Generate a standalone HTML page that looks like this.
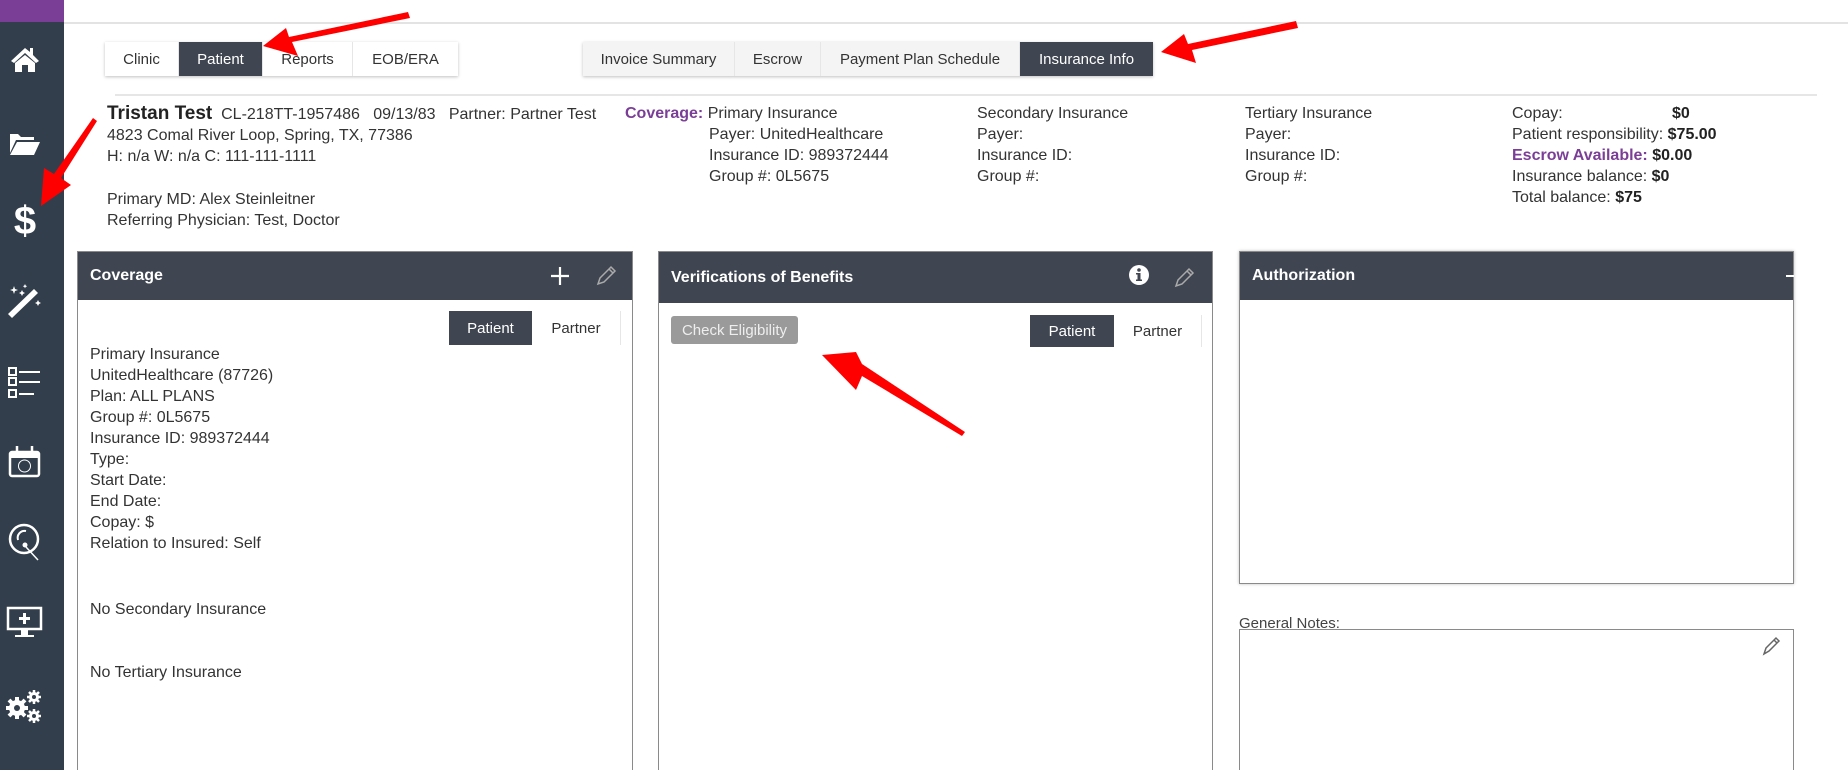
<!DOCTYPE html>
<html><head><meta charset="utf-8"><style>
*{box-sizing:border-box;margin:0;padding:0}
html{width:1848px;height:770px;overflow:hidden}
body{width:1848px;height:770px;overflow:hidden;background:#fff;font-family:"Liberation Sans",sans-serif;color:#333;font-size:16px;position:relative}
.abs{position:absolute}
.sb{left:0;top:0;width:64px;height:770px;background:#323e4b}
.purple{left:0;top:0;width:64px;height:22px;background:#7a3e96}
.topline{left:64px;top:22px;width:1784px;height:2px;background:#e3e3e3}
.tabs{display:flex;box-shadow:0 1px 3px rgba(0,0,0,.25);height:34px}
.tabs div{display:flex;align-items:center;justify-content:center;font-size:15px;color:#333;border-right:1px solid #e6e6e6}
.tabs .on{background:#3f4651;color:#fff}
.l{position:absolute;white-space:nowrap;line-height:21px}
.panel{position:absolute;border:1px solid #8a8a8a;box-shadow:0 0 3px rgba(0,0,0,.25)}
.open{border-bottom:none;box-shadow:none}
.ph{height:48px;background:#3f4651;color:#fff;font-weight:bold;font-size:16px;padding-left:12px;display:flex;align-items:center}
.tg{position:absolute;display:flex;height:34px}
.tg div{display:flex;align-items:center;justify-content:center;font-size:15px}
.tg .on{background:#3f4651;color:#fff}
.pur{color:#7a3e96;font-weight:bold}
b{font-weight:bold;color:#222}
</style></head><body>
<div class="abs sb"></div><div class="abs purple"></div><div class="abs topline"></div>
<svg class="abs" style="left:0;top:0" width="64" height="770" fill="#fff">
<path d="M25 48 L11 61 L14 63 L25 53 L36 63 L39 61 L33 55 V48 H30 V52 Z M15 63 V72 H22 V65 H28 V72 H35 V63 L25 55 Z"/>
<path d="M10 134 H18 L21 137 H34 V140 H16 L10 153 Z M17 142 H40 L34 155 H10 Z"/>
<text x="25" y="234" font-family="Liberation Sans" font-weight="bold" font-size="40" text-anchor="middle" fill="#fff">$</text>
<path d="M34 289 L38 293 L12 318 L8 314 Z"/>
<path d="M14 286 l1 3 3 1 -3 1 -1 3 -1 -3 -3 -1 3 -1z M22 290 l1 2 2 1 -2 1 -1 2 -1 -2 -2 -1 2 -1z M38 300 l1 2 2 1 -2 1 -1 2 -1 -2 -2 -1 2 -1z M25 284 l.7 1.5 1.5.7 -1.5.7 -.7 1.5 -.7-1.5 -1.5-.7 1.5-.7z"/>
<g fill="none" stroke="#fff" stroke-width="2"><rect x="9" y="368" width="7" height="7"/><rect x="9" y="378" width="7" height="7"/><rect x="9" y="390" width="7" height="7"/><path d="M19 372 H40 M19 382 H40 M19 394 H34"/></g>
<g fill="none" stroke="#fff" stroke-width="2.5"><rect x="10" y="452" width="29" height="24" rx="2"/><path d="M17 446 V454 M32 446 V454"/><circle cx="24.5" cy="466" r="6" stroke-width="1"/></g>
<path d="M10 452 H39 V458 H10 Z"/>
<g fill="none" stroke="#fff" stroke-width="2.5"><circle cx="24" cy="539" r="14"/><path d="M18 540 a7 7 0 0 1 8 -9" stroke-width="2"/><path d="M26 547 L38 560" stroke-width="1.5"/></g>
<circle cx="25" cy="545" r="2.5"/>
<g fill="none" stroke="#fff" stroke-width="2.5"><rect x="8" y="608" width="33" height="21"/></g>
<path d="M21 629 H28 V635 H34 V637 H15 V635 H21 Z M23 613 H26 V617 H30 V620 H26 V624 H23 V620 H19 V617 H23 Z"/>
<g fill="#fff"><circle cx="17" cy="708" r="8"/><circle cx="34" cy="697" r="5"/><circle cx="34" cy="716" r="5"/></g>
<g stroke="#fff" stroke-width="4"><path d="M17 697 V719 M6 708 H28 M9 700 L25 716 M25 700 L9 716"/></g>
<g stroke="#fff" stroke-width="2.5"><path d="M34 690 V704 M27 697 H41 M29 692 L39 702 M39 692 L29 702 M34 709 V723 M27 716 H41 M29 711 L39 721 M39 711 L29 721"/></g>
<g fill="#323e4b"><circle cx="17" cy="708" r="3"/><circle cx="34" cy="697" r="2"/><circle cx="34" cy="716" r="2"/></g>
</svg>

<div class="abs tabs" style="left:105px;top:42px;width:353px">
<div style="width:74px">Clinic</div><div class="on" style="width:84px">Patient</div><div style="width:90px">Reports</div><div style="width:105px;border:0">EOB/ERA</div></div>
<div class="abs tabs" style="left:583px;top:42px;width:570px;background:#f4f4f4">
<div style="width:152px">Invoice Summary</div><div style="width:86px">Escrow</div><div style="width:199px">Payment Plan Schedule</div><div class="on" style="width:133px;border:0">Insurance Info</div></div>
<div class="abs" style="left:115px;top:94px;width:1702px;height:2px;background:#e6e6e6"></div>

<div class="l" style="left:107px;top:103px"><b style="font-size:19px">Tristan Test</b>&nbsp; CL-218TT-1957486 &nbsp; 09/13/83 &nbsp; Partner: Partner Test</div>
<div class="l" style="left:107px;top:125px">4823 Comal River Loop, Spring, TX, 77386</div>
<div class="l" style="left:107px;top:146px">H: n/a W: n/a C: 111-111-1111</div>
<div class="l" style="left:107px;top:189px">Primary MD: Alex Steinleitner</div>
<div class="l" style="left:107px;top:210px">Referring Physician: Test, Doctor</div>

<div class="l" style="left:625px;top:103px"><span class="pur">Coverage:</span> Primary Insurance</div>
<div class="l" style="left:709px;top:124px">Payer: UnitedHealthcare<br>Insurance ID: 989372444<br>Group #: 0L5675</div>
<div class="l" style="left:977px;top:103px">Secondary Insurance<br>Payer:<br>Insurance ID:<br>Group #:</div>
<div class="l" style="left:1245px;top:103px">Tertiary Insurance<br>Payer:<br>Insurance ID:<br>Group #:</div>
<div class="l" style="left:1512px;top:103px">Copay:<br>Patient responsibility: <b>$75.00</b><br><span class="pur">Escrow Available:</span> <b>$0.00</b><br>Insurance balance: <b>$0</b><br>Total balance: <b>$75</b></div>
<div class="l" style="left:1672px;top:103px"><b>$0</b></div>

<div class="panel open" style="left:77px;top:251px;width:556px;height:519px">
<div class="ph">Coverage</div>
</div>
<svg class="abs" style="left:550px;top:266px" width="20" height="20"><path d="M10 1 V19 M1 10 H19" stroke="#fff" stroke-width="2.2"/></svg>
<svg class="abs" style="left:594px;top:264px" width="24" height="24"><g fill="none" stroke="#aaa" stroke-width="1.5"><path d="M4 20 L6 14 L17 3 L21 7 L10 18 Z M15 5 L19 9"/></g></svg>
<div class="tg" style="left:449px;top:311px"><div class="on" style="width:83px">Patient</div><div style="width:89px;border-right:1px solid #e6e6e6">Partner</div></div>
<div class="l" style="left:90px;top:344px">Primary Insurance<br>UnitedHealthcare (87726)<br>Plan: ALL PLANS<br>Group #: 0L5675<br>Insurance ID: 989372444<br>Type:<br>Start Date:<br>End Date:<br>Copay: $<br>Relation to Insured: Self</div>
<div class="l" style="left:90px;top:599px">No Secondary Insurance</div>
<div class="l" style="left:90px;top:662px">No Tertiary Insurance</div>

<div class="panel open" style="left:658px;top:251px;width:555px;height:519px"><div class="ph" style="height:51px">Verifications of Benefits</div></div>
<svg class="abs" style="left:1128px;top:264px" width="22" height="22"><circle cx="11" cy="11" r="10" fill="#fff"/><circle cx="11" cy="6" r="1.8" fill="#3f4651"/><path d="M8 9 H12.5 V15.5 H14 V17 H8 V15.5 H9.5 V10.5 H8Z" fill="#3f4651"/></svg>
<svg class="abs" style="left:1172px;top:266px" width="24" height="24"><g fill="none" stroke="#aaa" stroke-width="1.5"><path d="M4 20 L6 14 L17 3 L21 7 L10 18 Z M15 5 L19 9"/></g></svg>
<div class="abs" style="left:671px;top:316px;width:127px;height:28px;background:#9a9a9a;border-radius:3px;color:#eee;font-size:15px;display:flex;align-items:center;justify-content:center">Check Eligibility</div>
<div class="tg" style="left:1030px;top:315px;height:32px"><div class="on" style="width:84px">Patient</div><div style="width:88px;border-right:1px solid #e6e6e6">Partner</div></div>

<div class="panel" style="left:1239px;top:251px;width:555px;height:333px"><div class="ph">Authorization</div></div>
<div class="abs" style="left:1786px;top:275px;width:8px;height:2px;background:#fff"></div>
<div class="l" style="left:1239px;top:613px;font-size:15px;color:#444">General Notes:</div>
<div class="panel open" style="left:1239px;top:629px;width:555px;height:141px"></div>
<svg class="abs" style="left:1760px;top:635px" width="22" height="22"><g fill="none" stroke="#666" stroke-width="1.5"><path d="M4 19 L6 13 L16 3 L19 6 L9 16 Z M14 5 L17 8"/></g></svg>

<svg class="abs" style="left:0;top:0" width="1848" height="770" fill="#f00">
<polygon points="408,12 410,18 292,42 298,56 263,46 286,28 289,37"/>
<polygon points="1296,21 1298,28 1192,50 1196,63 1161,52 1184,34 1188,44"/>
<polygon points="93,118 97,121 61,178 71,185 41,206 44,168 54,174"/>
<polygon points="965,432 962,436 862,376 856,390 822,355 856,352 862,364"/>
</svg>
</body></html>
